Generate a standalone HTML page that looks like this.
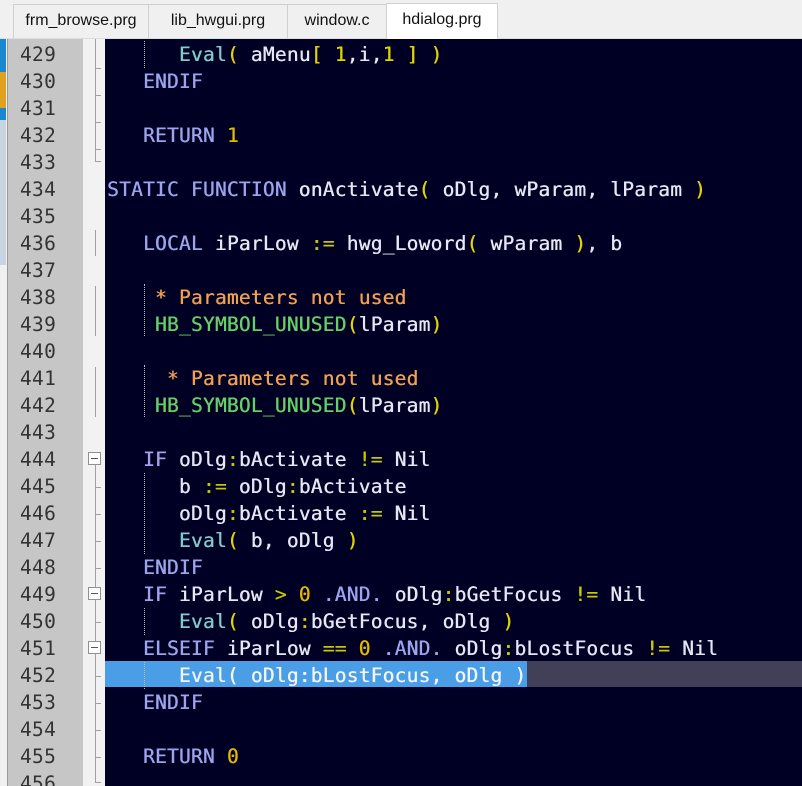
<!DOCTYPE html>
<html><head><meta charset="utf-8"><style>
html,body{margin:0;width:802px;height:786px;overflow:hidden}
body{background:#f0f0f0;position:relative;font-family:"DejaVu Sans Mono",monospace}
.tabs{position:absolute;left:0;top:0;width:802px;height:38px;background:#f0f0f0;border-bottom:1px solid #ddd}
.tab{position:absolute;top:4px;height:33px;border:1px solid #d0d0d0;border-bottom:none;background:#f0f0f0;font:16px "Liberation Sans",sans-serif;color:#111;text-align:center;line-height:32px}
.tab.act{background:#fff;top:3px;height:35px}
.gut{position:absolute;left:7px;top:39px;width:76px;height:747px;background:#c6c6c6;border-left:1px solid #999}
.fold{position:absolute;left:83px;top:39px;width:22px;height:747px;background:#f2f2f2}
.code{position:absolute;left:105px;top:39px;width:697px;height:747px;background:#000024}
.ln{position:absolute;left:20px;font-size:19.5px;color:#333;line-height:27px;letter-spacing:0.3px}
.l{position:absolute;left:107px;font-size:19.5px;line-height:27px;white-space:pre;color:#e6e6f4;letter-spacing:0.24px;text-shadow:0.4px 0 0 currentColor}
.k{color:#9ea4ec}.f{color:#80cccc}.y{color:#e2d200}.o{color:#c8c800}.c{color:#f0a050}.g{color:#66d066}.n{color:#e2b800}
.hl{position:absolute;left:105px;top:661px;width:697px;height:26px;background:#414058}
.sel{position:absolute;left:105px;top:661px;width:422px;height:26px;background:#4a9ee6}
.vl{position:absolute;left:95px;width:1px;background:#a0a0a0}
.tk{position:absolute;left:95px;width:6px;height:1px;background:#a0a0a0}
.bx{position:absolute;left:88px;width:13px;height:13px;border:1px solid #909090;background:#fff;box-sizing:border-box}
.bx:after{content:"";position:absolute;left:2px;top:5px;width:7px;height:1px;background:#555}
.dg{position:absolute;width:0;border-left:1px dotted #bbb}
</style></head><body>
<div style="position:absolute;left:0;top:33px;width:6px;height:87px;background:#1a88d0"></div>
<div style="position:absolute;left:0;top:72px;width:6px;height:36px;background:#e0a020"></div>
<div style="position:absolute;left:0;top:120px;width:6px;height:145px;background:#c8d4e0"></div>
<div class="tabs">
<div class="tab" style="left:13px;width:134px">frm_browse.prg</div>
<div class="tab" style="left:148px;width:138px">lib_hwgui.prg</div>
<div class="tab" style="left:287px;width:98px">window.c</div>
<div class="tab act" style="left:386px;width:110px">hdialog.prg</div>
</div>
<div class="gut"></div><div class="fold"></div><div class="code"></div>
<div class="hl"></div><div class="sel"></div>
<div class="vl" style="top:39px;height:122px"></div>
<div class="tk" style="top:68px"></div><div class="tk" style="top:95px"></div><div class="tk" style="top:122px"></div><div class="tk" style="top:149px"></div><div class="tk" style="top:161px"></div>
<div class="vl" style="top:230px;height:26px"></div>
<div class="vl" style="top:286px;height:50px"></div>
<div class="vl" style="top:367px;height:50px"></div>
<div class="vl" style="top:453px;height:330px"></div>
<div class="bx" style="top:452px"></div><div class="bx" style="top:587px"></div><div class="bx" style="top:641px"></div>
<div class="tk" style="top:487px"></div><div class="tk" style="top:514px"></div><div class="tk" style="top:541px"></div><div class="tk" style="top:568px"></div><div class="tk" style="top:622px"></div><div class="tk" style="top:676px"></div><div class="tk" style="top:703px"></div><div class="tk" style="top:730px"></div><div class="tk" style="top:757px"></div><div class="tk" style="top:782px"></div>
<div class="dg" style="left:144px;top:41px;height:27px"></div>
<div class="dg" style="left:144px;top:284px;height:52px"></div>
<div class="dg" style="left:144px;top:365px;height:52px"></div>
<div class="dg" style="left:144px;top:473px;height:81px"></div>
<div class="dg" style="left:144px;top:608px;height:27px"></div>
<div class="dg" style="left:144px;top:662px;height:27px"></div>

<div class="ln" style="top:41px">429</div><div class="l" style="top:41px">      <span class="f">Eval</span><span class="y">(</span> aMenu<span class="y">[ 1</span>,i,<span class="y">1 ] )</span></div>
<div class="ln" style="top:68px">430</div><div class="l k" style="top:68px">   ENDIF</div>
<div class="ln" style="top:95px">431</div>
<div class="ln" style="top:122px">432</div><div class="l" style="top:122px">   <span class="k">RETURN</span> <span class="n">1</span></div>
<div class="ln" style="top:149px">433</div>
<div class="ln" style="top:176px">434</div><div class="l" style="top:176px"><span class="k">STATIC FUNCTION</span> onActivate<span class="y">(</span> oDlg, wParam, lParam <span class="y">)</span></div>
<div class="ln" style="top:203px">435</div>
<div class="ln" style="top:230px">436</div><div class="l" style="top:230px">   <span class="k">LOCAL</span> iParLow <span class="o">:=</span> hwg_Loword<span class="y">(</span> wParam <span class="y">)</span>, b</div>
<div class="ln" style="top:257px">437</div>
<div class="ln" style="top:284px">438</div><div class="l c" style="top:284px">    * Parameters not used</div>
<div class="ln" style="top:311px">439</div><div class="l" style="top:311px">    <span class="g">HB_SYMBOL_UNUSED</span><span class="y">(</span>lParam<span class="y">)</span></div>
<div class="ln" style="top:338px">440</div>
<div class="ln" style="top:365px">441</div><div class="l c" style="top:365px">     * Parameters not used</div>
<div class="ln" style="top:392px">442</div><div class="l" style="top:392px">    <span class="g">HB_SYMBOL_UNUSED</span><span class="y">(</span>lParam<span class="y">)</span></div>
<div class="ln" style="top:419px">443</div>
<div class="ln" style="top:446px">444</div><div class="l" style="top:446px">   <span class="k">IF</span> oDlg<span class="o">:</span>bActivate <span class="o">!=</span> Nil</div>
<div class="ln" style="top:473px">445</div><div class="l" style="top:473px">      b <span class="o">:=</span> oDlg<span class="o">:</span>bActivate</div>
<div class="ln" style="top:500px">446</div><div class="l" style="top:500px">      oDlg<span class="o">:</span>bActivate <span class="o">:=</span> Nil</div>
<div class="ln" style="top:527px">447</div><div class="l" style="top:527px">      <span class="f">Eval</span><span class="y">(</span> b, oDlg <span class="y">)</span></div>
<div class="ln" style="top:554px">448</div><div class="l k" style="top:554px">   ENDIF</div>
<div class="ln" style="top:581px">449</div><div class="l" style="top:581px">   <span class="k">IF</span> iParLow <span class="o">&gt;</span> <span class="n">0</span> <span class="k">.AND.</span> oDlg<span class="o">:</span>bGetFocus <span class="o">!=</span> Nil</div>
<div class="ln" style="top:608px">450</div><div class="l" style="top:608px">      <span class="f">Eval</span><span class="y">(</span> oDlg<span class="o">:</span>bGetFocus, oDlg <span class="y">)</span></div>
<div class="ln" style="top:635px">451</div><div class="l" style="top:635px">   <span class="k">ELSEIF</span> iParLow <span class="o">==</span> <span class="n">0</span> <span class="k">.AND.</span> oDlg<span class="o">:</span>bLostFocus <span class="o">!=</span> Nil</div>
<div class="ln" style="top:662px">452</div><div class="l" style="top:662px;color:#f4f4ff">      Eval( oDlg:bLostFocus, oDlg )</div>
<div class="ln" style="top:689px">453</div><div class="l k" style="top:689px">   ENDIF</div>
<div class="ln" style="top:716px">454</div>
<div class="ln" style="top:743px">455</div><div class="l" style="top:743px">   <span class="k">RETURN</span> <span class="n">0</span></div>
<div class="ln" style="top:770px">456</div>
</body></html>
